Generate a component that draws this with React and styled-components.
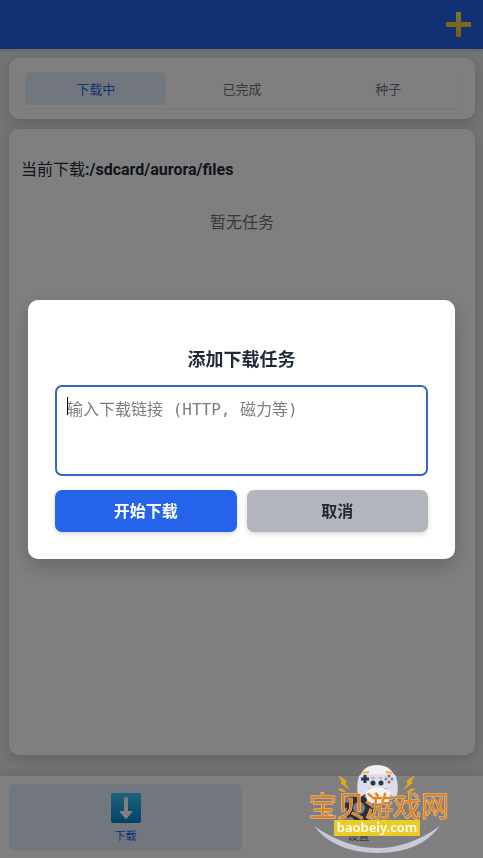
import React, { useState } from 'react';
import styled, { createGlobalStyle } from "styled-components";

const colors = {
    primary: '#2563eb',
    tint: '#e4eefa',
    page: '#e6e8ea',
    dark: '#1f2937',
    muted: '#6b7280',
};

const GlobalStyle = createGlobalStyle`
    * {
        box-sizing: border-box;
    }
    body {
        margin: 0;
        background: ${colors.page};
        color: ${colors.dark};
        font-family: Roboto, "Noto Sans CJK SC", sans-serif;
        font-size: 16px;
    }
    button {
        font-family: inherit;
        border: none;
        cursor: pointer;
    }
`;

const Page = styled.div`
    display: flex;
    flex-direction: column;
    min-height: 100vh;
`;

const Header = styled.header`
    display: flex;
    align-items: center;
    justify-content: flex-end;
    height: 49px;
    padding: 0 12px;
    background: ${colors.primary};
    box-shadow: 0 2px 4px rgba(0, 0, 0, 0.1);
`;

const AddButton = styled.button`
    display: flex;
    padding: 0;
    background: transparent;
`;

const Main = styled.main`
    flex: 1;
    display: flex;
    flex-direction: column;
    gap: 10px;
    padding: 9px 8px 21px 9px;
`;

const Card = styled.section`
    flex: ${props => (props.$grow ? 1 : 'none')};
    padding: ${props => (props.$grow ? '31px 12px' : '11px 12px')};
    background: #fff;
    border-radius: 10px;
    box-shadow: 0 4px 14px rgba(0, 0, 0, 0.16);
`;

const Tabs = styled.nav`
    display: flex;
    gap: 5px;
    padding: 3px 4px;
    border-radius: 6px;
    box-shadow: 0 1px 2px rgba(0, 0, 0, 0.08);
`;

const Tab = styled.button`
    flex: 1;
    height: 33px;
    padding: 0;
    font-size: 13px;
    border-radius: 5px;
    background: ${props => (props.$active ? colors.tint : 'transparent')};
    color: ${props => (props.$active ? colors.primary : colors.muted)};
`;

const Path = styled.p`
    margin: 0;
    line-height: 20px;
    strong {
        font-weight: 700;
    }
`;

const Empty = styled.p`
    margin: 32px 0 0;
    line-height: 22px;
    text-align: center;
    color: ${colors.muted};
`;

const BottomNav = styled.nav`
    display: flex;
    padding: 8px 8px 7px 9px;
    background: #fff;
    box-shadow: 0 -2px 8px rgba(0, 0, 0, 0.12);
`;

const NavButton = styled.button`
    flex: 1;
    display: flex;
    flex-direction: column;
    align-items: center;
    justify-content: center;
    gap: 6px;
    height: 67px;
    padding: 2px 0 0;
    font-size: 11px;
    line-height: 16px;
    border-radius: 5px;
    background: ${props => (props.$active ? colors.tint : 'transparent')};
    color: ${props => (props.$active ? colors.primary : colors.muted)};
`;

const Overlay = styled.div`
    position: fixed;
    inset: 0;
    display: flex;
    align-items: center;
    justify-content: center;
    padding: 28px;
    background: rgba(0, 0, 0, 0.5);
`;

const Dialog = styled.form`
    width: 100%;
    max-width: 480px;
    padding: 46px 27px 27px;
    background: #fff;
    border-radius: 10px;
    box-shadow: 0 8px 20px rgba(0, 0, 0, 0.2);
    h2 {
        margin: 0 0 12px;
        font-size: 18px;
        line-height: 27px;
        text-align: center;
    }
`;

const LinkField = styled.div`
    position: relative;
    display: flex;
    margin-bottom: 14px;
    textarea {
        width: 100%;
        height: 91px;
        padding: 10px;
        border: 2px solid #3566c4;
        border-radius: 7px;
        outline: none;
        resize: none;
        caret-color: transparent;
        font-family: "DejaVu Sans Mono", "Noto Sans CJK SC", monospace;
        font-size: 16px;
        line-height: 26px;
    }
    textarea::placeholder {
        color: #7d7d7d;
    }
`;

const Caret = styled.span`
    position: absolute;
    top: 12px;
    left: 12px;
    width: 1px;
    height: 18px;
    background: #000;
`;

const Actions = styled.div`
    display: flex;
    gap: 10px;
`;

const ActionButton = styled.button`
    flex: 1;
    height: 42px;
    padding: 0 0 2px;
    font-size: 16px;
    font-weight: 700;
    border-radius: 7px;
    background: ${props => (props.$primary ? colors.primary : '#b2b6bc')};
    color: ${props => (props.$primary ? '#fff' : colors.dark)};
    box-shadow: 0 2px 5px rgba(0, 0, 0, 0.16);
`;

const SiteBadge = styled.a`
    position: fixed;
    right: 32px;
    bottom: 4px;
    display: flex;
`;

const PlusIcon = () => (
    <svg width="25" height="25" viewBox="0 0 25 25" aria-hidden="true">
        <defs>
            <linearGradient id="plus" x1="0" y1="0" x2="0" y2="1">
                <stop offset="0" stopColor="#ffe650" />
                <stop offset="1" stopColor="#f0b92c" />
            </linearGradient>
        </defs>
        <path d="M10 0h5v10h10v5H15v10h-5V15H0v-5h10z" fill="url(#plus)" />
    </svg>
);

const DownIcon = () => (
    <svg width="30" height="30" viewBox="0 0 30 30" aria-hidden="true">
        <defs>
            <linearGradient id="down" x1="0" y1="0" x2="0" y2="1">
                <stop offset="0" stopColor="#42c3f5" />
                <stop offset="1" stopColor="#0288d1" />
            </linearGradient>
        </defs>
        <rect width="30" height="30" rx="2" fill="url(#down)" />
        <path d="M13 6q0-2 2-2t2 2v12h4q1 0 0 1.200l-5 6q-1 1-2 0l-5-6q-1-1.200 0-1.200h4z" fill="#fff" />
    </svg>
);

const GearIcon = () => (
    <svg width="30" height="30" viewBox="0 0 30 30" aria-hidden="true">
        <circle cx="15" cy="15" r="9" fill="none" stroke="#5a5f66" strokeWidth="6" />
        <circle cx="15" cy="15" r="13" fill="none" stroke="#5a5f66" strokeWidth="4" strokeDasharray="5.100 5.110" />
    </svg>
);

const BadgeArt = () => (
    <svg width="143" height="90" viewBox="0 0 143 90" aria-hidden="true">
        <path d="M6 62Q70 106 132 62Q112 89 70 89Q27 89 6 62Z" fill="#c9cad8" />
        <path d="M51 16Q54 1 69 1T88 16z" fill="#efeff1" />
        <path d="M55 9l6-1M78 8l6 1" stroke="#e7b431" strokeWidth="2" />
        <path d="M51 12Q53 9 60 10H79Q86 9 88 12Q91 24 89 31Q87 36 82 30L78 24H61L57 30Q50 36 50 30Q48 22 51 12Z" fill="#dcdde8" />
        <path d="M57 29Q60 23 69 23T83 29L80 39H60Z" fill="#f3f3f5" />
        <path d="M57 11v8M53 15h8" stroke="#20394b" strokeWidth="3" />
        <circle cx="65" cy="19" r="2.500" fill="#20394b" />
        <circle cx="73" cy="19" r="2.500" fill="#20394b" />
        <path d="M63 14h4M71 14h3" stroke="#d87991" />
        <circle cx="81" cy="12" r="1.500" fill="#da4658" />
        <circle cx="81" cy="18" r="1.500" fill="#da4658" />
        <circle cx="78" cy="15" r="1.500" fill="#35a5c7" />
        <circle cx="84" cy="15" r="1.500" fill="#35a5c7" />
        <path d="M31 12l7 5-1 3 4 5-8-6 1-2zM30 25l4 0 1 1 3 2-5-1-1-1z" fill="#e5a526" stroke="#e5a526" />
        <path d="M106 12l-7 5 1 3-4 5 8-6-1-2zM107 25l-4 0-1 1-3 2 5-1 1-1z" fill="#e5a526" stroke="#e5a526" />
        <text
            x="71"
            y="53"
            textAnchor="middle"
            fontFamily="Noto Sans CJK SC, sans-serif"
            fontSize="28"
            fontWeight="400"
            fill="#e0821f"
            stroke="#f5cfa2"
            strokeWidth="1"
            paintOrder="stroke"
        >
            宝贝游戏网
        </text>
        <rect x="26" y="56" width="86" height="16" fill="#ebcb25" />
        <text
            x="69"
            y="68"
            textAnchor="middle"
            fontFamily="Noto Sans, sans-serif"
            fontSize="13"
            fontWeight="600"
            fill="#fff"
        >
            baobeiy.com
        </text>
    </svg>
);

const tabs = ['下载中', '已完成', '种子'];

const App = () => {
    const [tab, setTab] = useState(tabs[0]);
    const [open, setOpen] = useState(true);
    const [link, setLink] = useState('');

    const submit = (e) => {
        e.preventDefault();
        setOpen(false);
    };

    return (
        <Page>
            <GlobalStyle />
            <Header>
                <AddButton type="button" aria-label="添加下载任务" onClick={() => setOpen(true)}>
                    <PlusIcon />
                </AddButton>
            </Header>

            <Main>
                <Card>
                    <Tabs>
                        {tabs.map(name => (
                            <Tab key={name} type="button" $active={name === tab} onClick={() => setTab(name)}>
                                {name}
                            </Tab>
                        ))}
                    </Tabs>
                </Card>
                <Card $grow>
                    <Path>当前下载<strong>:/sdcard/aurora/files</strong></Path>
                    <Empty>暂无任务</Empty>
                </Card>
            </Main>

            <BottomNav>
                <NavButton type="button" $active>
                    <DownIcon />
                    下载
                </NavButton>
                <NavButton type="button">
                    <GearIcon />
                    设置
                </NavButton>
            </BottomNav>

            {open && (
                <Overlay>
                    <Dialog role="dialog" aria-labelledby="dialog-title" onSubmit={submit}>
                        <h2 id="dialog-title">添加下载任务</h2>
                        <LinkField>
                            <textarea
                                aria-labelledby="dialog-title"
                                placeholder="输入下载链接 (HTTP, 磁力等)"
                                value={link}
                                onChange={e => setLink(e.target.value)}
                            />
                            {!link && <Caret />}
                        </LinkField>
                        <Actions>
                            <ActionButton type="submit" $primary>开始下载</ActionButton>
                            <ActionButton type="button" onClick={() => setOpen(false)}>取消</ActionButton>
                        </Actions>
                    </Dialog>
                </Overlay>
            )}

            <SiteBadge href="#" aria-label="宝贝游戏网 baobeiy.com">
                <BadgeArt />
            </SiteBadge>
        </Page>
    );
};

export default App;
